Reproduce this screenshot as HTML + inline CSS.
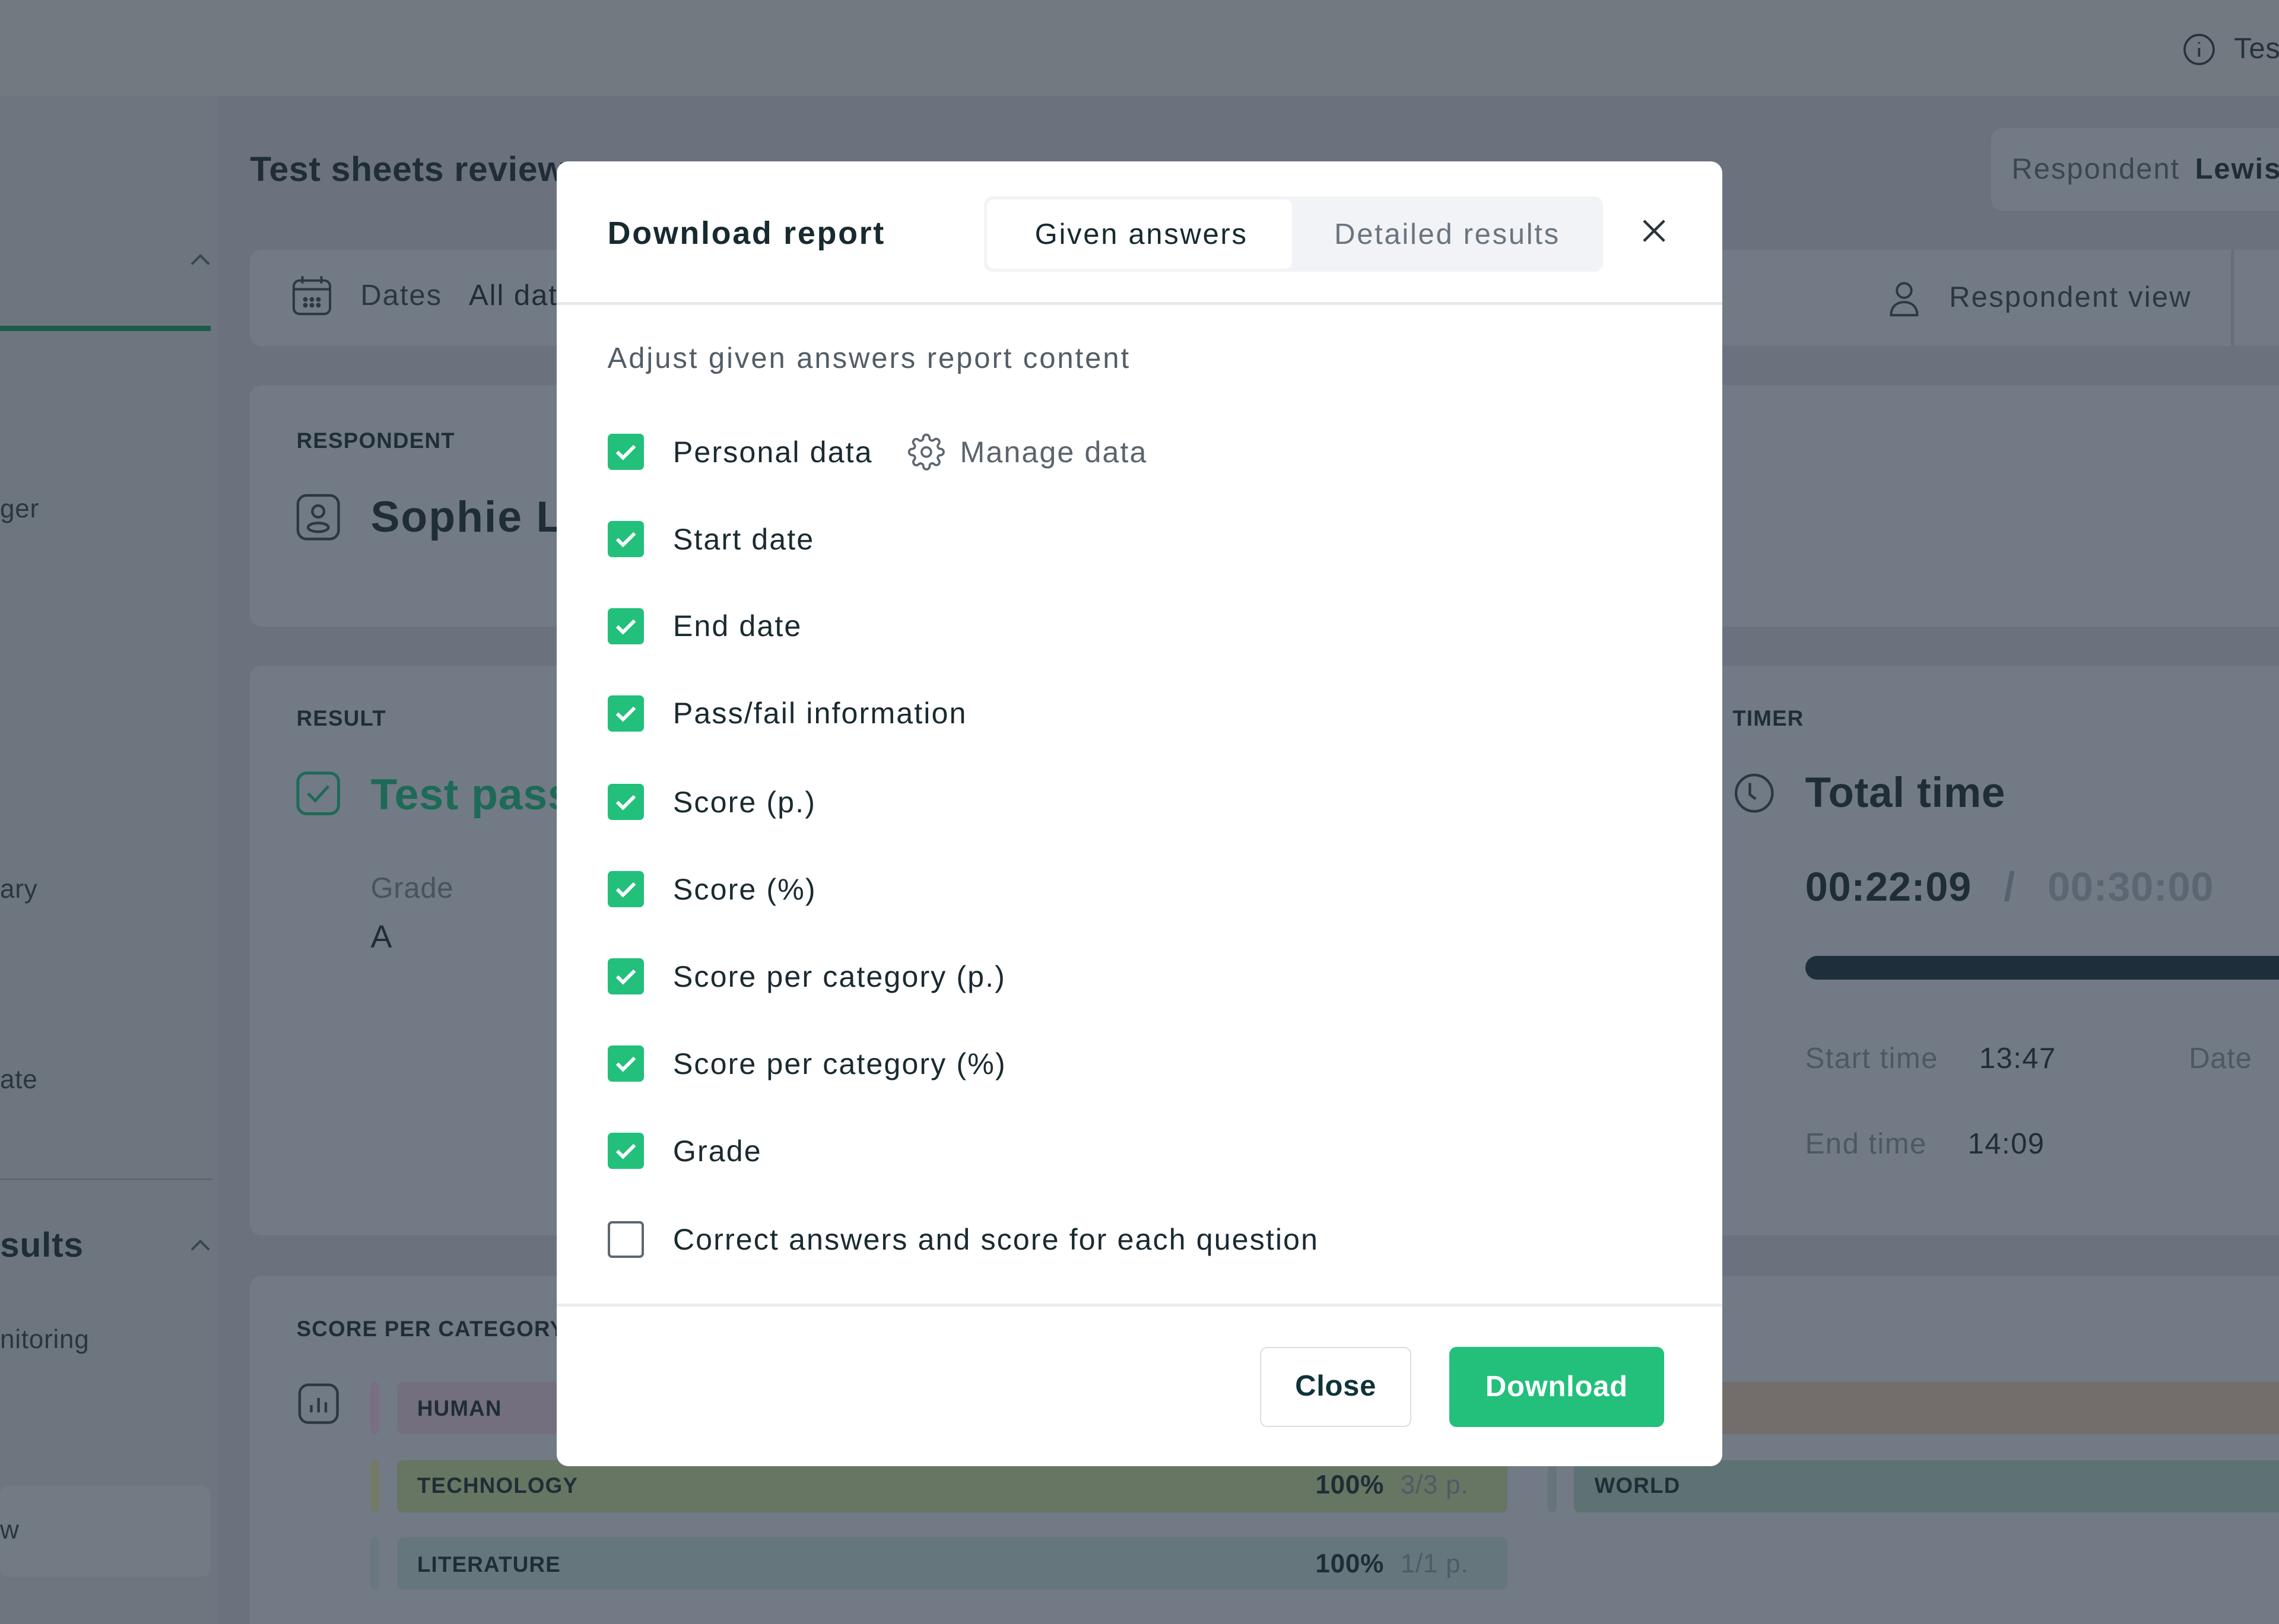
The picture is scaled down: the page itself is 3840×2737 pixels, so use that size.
<!DOCTYPE html>
<html><head><meta charset="utf-8"><style>
*{box-sizing:border-box;margin:0;padding:0}
html,body{width:3840px;height:2737px;overflow:hidden;background:#6b727d}
#w{zoom:2.449;width:1568px;height:1118px;position:relative;font-family:"Liberation Sans",sans-serif;color:#1f2d36;letter-spacing:.3px}
.a{position:absolute;white-space:nowrap}
.card{position:absolute;background:#727a85;border-radius:8px}
.lab{font-size:15px;font-weight:bold;letter-spacing:.5px;color:#1f2d36}
.m{position:absolute;left:383px;top:111px;width:802px;height:898px;background:#fff;border-radius:8px}
.row{position:absolute;left:35px;height:26px;display:flex;align-items:center}
.cb{width:25px;height:25px;border-radius:3px;background:#22c07b;display:flex;align-items:center;justify-content:center;margin-right:20px}
.cb.e{background:#fff;border:2px solid #5d6770}
.row span{font-size:20.5px;color:#1a2a31;letter-spacing:.85px}
</style></head><body><div id="w">
<div class="a" style="left:0;top:0;width:1568px;height:66px;background:#727981"></div>
<svg class="a" style="left:1501px;top:22px" width="24" height="24" viewBox="0 0 24 24" fill="none" stroke="#26333b" stroke-width="1.5"><circle cx="12" cy="12" r="10"/><path d="M12 11v6M12 7v1"/></svg>
<div class="a" style="left:1537px;top:22px;font-size:20px;color:#26333b">Tes</div>
<div class="a" style="left:0;top:66px;width:150px;height:1052px;background:#6d767e"></div>
<div class="a" style="left:0;top:224px;width:145px;height:4px;background:#1d5b4d"></div>
<svg class="a" style="left:130px;top:172px" width="16" height="12"><path d="M2 10l6-6 6 6" stroke="#3a464e" stroke-width="1.6" fill="none"/></svg>
<div class="a" style="left:0;top:340px;font-size:18px;color:#2a363e">ger</div>
<div class="a" style="left:0;top:602px;font-size:18px;color:#2a363e">ary</div>
<div class="a" style="left:0;top:733px;font-size:18px;color:#2a363e">ate</div>
<div class="a" style="left:0;top:811px;width:146px;height:1px;background:#5f6870"></div>
<div class="a" style="left:0;top:843px;font-size:24px;font-weight:bold;color:#1f2d36">sults</div>
<svg class="a" style="left:130px;top:850px" width="16" height="12"><path d="M2 10l6-6 6 6" stroke="#3a464e" stroke-width="1.6" fill="none"/></svg>
<div class="a" style="left:0;top:912px;font-size:18px;color:#2a363e">nitoring</div>
<div class="a" style="left:0;top:1022px;width:145px;height:63px;background:#727b84;border-radius:6px"></div>
<div class="a" style="left:0;top:1043px;font-size:18px;color:#2a363e">w</div>
<div class="a" style="left:172px;top:103px;font-size:24px;font-weight:bold">Test sheets review</div>
<div class="card" style="left:1370px;top:88px;width:220px;height:57px"></div>
<div class="a" style="left:1384px;top:105px;font-size:20px;color:#3b4750;letter-spacing:.8px">Respondent <b style="color:#1f2d36;margin-left:4px">Lewis</b></div>
<div class="card" style="left:172px;top:172px;width:1420px;height:66px"></div>
<svg class="a" style="left:200px;top:189px" width="29" height="29" viewBox="0 0 29 29" fill="none" stroke="#2b3840" stroke-width="1.6"><rect x="2" y="4" width="25" height="23" rx="4"/><path d="M2 10h25M8 1v5M21 1v5"/><circle cx="10" cy="17" r=".8"/><circle cx="14.5" cy="17" r=".8"/><circle cx="19" cy="17" r=".8"/><circle cx="10" cy="21" r=".8"/><circle cx="14.5" cy="21" r=".8"/><circle cx="19" cy="21" r=".8"/></svg>
<div class="a" style="left:248px;top:192px;font-size:20px;color:#2b3840;letter-spacing:.8px">Dates <span style="margin-left:12px;color:#1f2d36">All dat</span></div>
<svg class="a" style="left:1298px;top:192px" width="24" height="26" fill="none" stroke="#2b3840" stroke-width="1.6"><circle cx="12" cy="8" r="5"/><path d="M3 25c0-6 4-9 9-9s9 3 9 9z"/></svg>
<div class="a" style="left:1341px;top:193px;font-size:20px;color:#2b3840;letter-spacing:.9px">Respondent view</div>
<div class="a" style="left:1535px;top:172px;width:2px;height:66px;background:#676f79"></div>
<div class="card" style="left:172px;top:265px;width:1420px;height:166px"></div>
<div class="a lab" style="left:204px;top:295px">RESPONDENT</div>
<svg class="a" style="left:203px;top:339px" width="32" height="34" fill="none" stroke="#2b3840" stroke-width="1.8"><rect x="2" y="2" width="28" height="30" rx="6"/><circle cx="16" cy="13" r="4"/><ellipse cx="16" cy="24" rx="7" ry="3"/></svg>
<div class="a" style="left:255px;top:338px;font-size:30px;font-weight:bold;letter-spacing:.8px">Sophie Le</div>
<div class="card" style="left:172px;top:458px;width:1420px;height:392px"></div>
<div class="a lab" style="left:204px;top:486px">RESULT</div>
<svg class="a" style="left:203px;top:530px" width="32" height="32" fill="none" stroke="#1d6a56" stroke-width="2"><rect x="2" y="2" width="28" height="28" rx="6"/><path d="M9 16l5 5 9-10"/></svg>
<div class="a" style="left:255px;top:529px;font-size:30px;font-weight:bold;color:#1d6a56">Test pass</div>
<div class="a" style="left:255px;top:600px;font-size:20px;color:#48545d">Grade</div>
<div class="a" style="left:255px;top:632px;font-size:22px;color:#1f2d36">A</div>
<div class="a lab" style="left:1192px;top:486px">TIMER</div>
<svg class="a" style="left:1192px;top:531px" width="30" height="30" fill="none" stroke="#2b3840" stroke-width="1.8"><circle cx="15" cy="15" r="12.5"/><path d="M12 8v8l4 3"/></svg>
<div class="a" style="left:1242px;top:529px;font-size:29px;font-weight:bold">Total time</div>
<div class="a" style="left:1242px;top:594px;font-size:28px;font-weight:bold">00:22:09 <span style="color:#566270;margin:0 14px">/</span> <span style="color:#5b6672">00:30:00</span></div>
<div class="a" style="left:1242px;top:658px;width:340px;height:16px;border-radius:8px;background:#1f2e3b"></div>
<div class="a" style="left:1242px;top:717px;font-size:20px;color:#4c5863;letter-spacing:.6px">Start time <span style="color:#1f2d36;margin-left:22px">13:47</span></div>
<div class="a" style="left:1506px;top:717px;font-size:20px;color:#4c5863">Date</div>
<div class="a" style="left:1242px;top:776px;font-size:20px;color:#4c5863;letter-spacing:.6px">End time <span style="color:#1f2d36;margin-left:22px">14:09</span></div>
<div class="card" style="left:172px;top:878px;width:1420px;height:260px"></div>
<div class="a lab" style="left:204px;top:906px">SCORE PER CATEGORY</div>
<svg class="a" style="left:204px;top:951px" width="30" height="30" fill="none" stroke="#2b3840" stroke-width="1.8"><rect x="2" y="2" width="26" height="26" rx="6"/><path d="M10 21v-5M15 21v-10M20 21v-7"/></svg>
<div class="a" style="left:255px;top:951px;width:6px;height:36px;background:#7a6f82;border-radius:3px"></div>
<div class="a" style="left:273px;top:951px;width:120px;height:36px;background:#736f7f;border-radius:4px"></div>
<div class="a" style="left:1185px;top:951px;width:400px;height:36px;background:#736d6c"></div>
<div class="a lab" style="left:287px;top:961px;font-weight:bold">HUMAN</div>
<div class="a" style="left:255px;top:1005px;width:6px;height:36px;background:#737a66;border-radius:3px"></div>
<div class="a" style="left:273px;top:1005px;width:764px;height:36px;background:#677563;border-radius:4px"></div>
<div class="a lab" style="left:287px;top:1014px">TECHNOLOGY</div>
<div class="a" style="left:905px;top:1012px;font-size:18px;font-weight:bold">100% <span style="font-weight:normal;color:#4f5c66;margin-left:6px">3/3 p.</span></div>
<div class="a" style="left:1065px;top:1005px;width:6px;height:36px;background:#65757a;border-radius:3px"></div>
<div class="a" style="left:1083px;top:1005px;width:500px;height:36px;background:#5f7273;border-radius:4px"></div>
<div class="a lab" style="left:1097px;top:1014px">WORLD</div>
<div class="a" style="left:255px;top:1058px;width:6px;height:36px;background:#687780;border-radius:3px"></div>
<div class="a" style="left:273px;top:1058px;width:764px;height:36px;background:#66767d;border-radius:4px"></div>
<div class="a lab" style="left:287px;top:1068px">LITERATURE</div>
<div class="a" style="left:905px;top:1066px;font-size:18px;font-weight:bold">100% <span style="font-weight:normal;color:#4f5c66;margin-left:6px">1/1 p.</span></div>

<div class="m">
 <div class="a" style="left:35px;top:37px;font-size:22px;font-weight:bold;color:#172a30;letter-spacing:1.1px">Download report</div>
 <div class="a" style="left:294px;top:24px;width:426px;height:52px;background:#f1f3f6;border-radius:6px"></div>
 <div class="a" style="left:296px;top:26px;width:210px;height:48px;background:#fff;border-radius:5px"></div>
 <div class="a" style="left:329px;top:39px;font-size:20px;color:#172a30;letter-spacing:1.1px">Given answers</div>
 <div class="a" style="left:535px;top:39px;font-size:20px;color:#6b7580;letter-spacing:1.1px">Detailed results</div>
 <svg class="a" style="left:746px;top:39px" width="18" height="18"><path d="M2 2l14 14M16 2L2 16" stroke="#28343c" stroke-width="1.8"/></svg>
 <div class="a" style="left:0;top:97px;width:802px;height:2px;background:#e7e8ec"></div>
 <div class="a" style="left:35px;top:124px;font-size:20px;color:#525d66;letter-spacing:1.2px">Adjust given answers report content</div>
 <div class="row" style="top:187px"><div class="cb"><svg width="16" height="12"><path d="M2 6l4 4 8-8" stroke="#fff" stroke-width="2.4" fill="none"/></svg></div><span>Personal data</span>
  <svg style="margin-left:24px;margin-right:10px" width="26" height="26" viewBox="0 0 24 24" fill="none" stroke="#5d6770" stroke-width="1.4"><circle cx="12" cy="12" r="3"/><path d="M19.4 15a1.650 1.650 0 0 0 .33 1.820l.06.06a2 2 0 1 1-2.830 2.830l-.06-.06a1.650 1.650 0 0 0-1.820-.33 1.650 1.650 0 0 0-1 1.510V21a2 2 0 1 1-4 0v-.09A1.650 1.650 0 0 0 9 19.4a1.650 1.650 0 0 0-1.820.33l-.06.06a2 2 0 1 1-2.830-2.830l.06-.06A1.650 1.650 0 0 0 4.680 15a1.650 1.650 0 0 0-1.510-1H3a2 2 0 1 1 0-4h.09A1.650 1.650 0 0 0 4.600 9a1.650 1.650 0 0 0-.33-1.820l-.06-.06a2 2 0 1 1 2.830-2.830l.06.06A1.650 1.650 0 0 0 9 4.680 1.650 1.650 0 0 0 10 3.170V3a2 2 0 1 1 4 0v.09a1.650 1.650 0 0 0 1 1.510 1.650 1.650 0 0 0 1.820-.33l.06-.06a2 2 0 1 1 2.830 2.830l-.06.06A1.650 1.650 0 0 0 19.4 9a1.650 1.650 0 0 0 1.510 1H21a2 2 0 1 1 0 4h-.09a1.650 1.650 0 0 0-1.510 1z"/></svg><span style="color:#5a646d">Manage data</span></div>
 <div class="row" style="top:247px"><div class="cb"><svg width="16" height="12"><path d="M2 6l4 4 8-8" stroke="#fff" stroke-width="2.4" fill="none"/></svg></div><span>Start date</span></div>
 <div class="row" style="top:307px"><div class="cb"><svg width="16" height="12"><path d="M2 6l4 4 8-8" stroke="#fff" stroke-width="2.4" fill="none"/></svg></div><span>End date</span></div>
 <div class="row" style="top:367px"><div class="cb"><svg width="16" height="12"><path d="M2 6l4 4 8-8" stroke="#fff" stroke-width="2.4" fill="none"/></svg></div><span>Pass/fail information</span></div>
 <div class="row" style="top:428px"><div class="cb"><svg width="16" height="12"><path d="M2 6l4 4 8-8" stroke="#fff" stroke-width="2.4" fill="none"/></svg></div><span>Score (p.)</span></div>
 <div class="row" style="top:488px"><div class="cb"><svg width="16" height="12"><path d="M2 6l4 4 8-8" stroke="#fff" stroke-width="2.4" fill="none"/></svg></div><span>Score (%)</span></div>
 <div class="row" style="top:548px"><div class="cb"><svg width="16" height="12"><path d="M2 6l4 4 8-8" stroke="#fff" stroke-width="2.4" fill="none"/></svg></div><span>Score per category (p.)</span></div>
 <div class="row" style="top:608px"><div class="cb"><svg width="16" height="12"><path d="M2 6l4 4 8-8" stroke="#fff" stroke-width="2.4" fill="none"/></svg></div><span>Score per category (%)</span></div>
 <div class="row" style="top:668px"><div class="cb"><svg width="16" height="12"><path d="M2 6l4 4 8-8" stroke="#fff" stroke-width="2.4" fill="none"/></svg></div><span>Grade</span></div>
 <div class="row" style="top:729px"><div class="cb e"></div><span>Correct answers and score for each question</span></div>
 <div class="a" style="left:0;top:786px;width:802px;height:2px;background:#ecebf0"></div>
 <div class="a" style="left:484px;top:816px;width:104px;height:55px;border:1px solid #dcdde2;border-radius:5px;font-size:20px;font-weight:bold;color:#10333a;text-align:center;line-height:53px">Close</div>
 <div class="a" style="left:614px;top:816px;width:148px;height:55px;background:#22c07b;border-radius:5px;font-size:20px;font-weight:bold;color:#fff;text-align:center;line-height:55px">Download</div>
</div>
</div></body></html>
